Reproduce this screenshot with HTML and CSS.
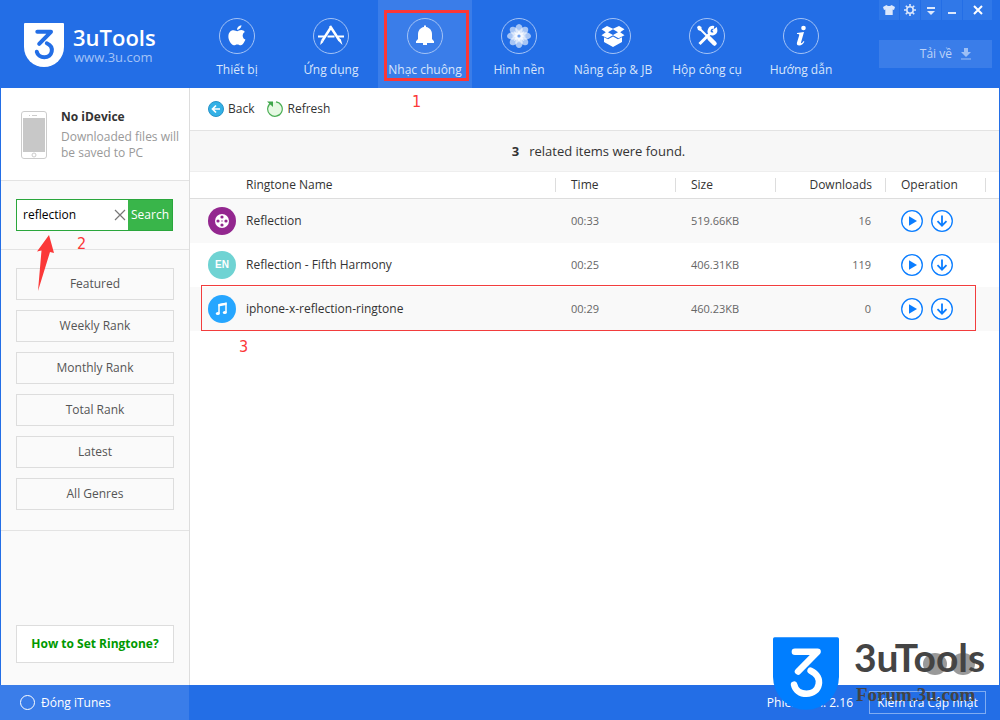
FILE: index.html
```html
<!DOCTYPE html>
<html lang="vi">
<head>
<meta charset="utf-8">
<meta name="viewport" content="width=device-width, initial-scale=1">
<title>3uTools</title>
<link rel="stylesheet" href="styles.css">
</head>
<body>
<svg class="defs" aria-hidden="true">
  <symbol id="play" viewBox="0 0 22 22"><circle cx="11" cy="11" r="10.3" fill="#fff" stroke="#0a7dff" stroke-width="1.3"/><path d="M8 6.3v9.4l8-4.7z" fill="#0a7dff"/></symbol>
  <symbol id="down" viewBox="0 0 22 22"><circle cx="11" cy="11" r="10.3" fill="#fff" stroke="#0a7dff" stroke-width="1.3"/><path d="M11 5.5v10M6.5 11.2l4.5 4.5 4.500-4.500" fill="none" stroke="#0a7dff" stroke-width="1.8"/></symbol>
  <symbol id="shield" viewBox="0 0 40 44"><path d="M1 0h38q1 0 1 1v23a20 20 0 0 1-40 0V1q0-1 1-1z" fill="currentColor"/><path class="shield-mark" d="M13.300 8.800H27L15.200 20.800M22.800 20.300C31 24 28.500 34.300 20.300 34.300 16.500 34.300 13.500 32 12.800 28.800" fill="none" stroke-width="4" stroke-linecap="round" stroke-linejoin="round"/></symbol>
</svg>
<div class="app">
  <header class="top">
    <div class="brand">
      <svg class="brand-logo"><use href="#shield"/></svg>
      <div><div class="brand-name">3uTools</div><div class="brand-url">www.3u.com</div></div>
    </div>
    <nav class="nav">
      <a href="#" class="tab">
        <svg viewBox="0 0 36 36"><circle cx="18" cy="18" r="17.500"/><path class="f" d="M22.400 7.200c.2 2-1.900 4.600-4.300 4.500-.2-2 1.900-4.300 4.300-4.500zM18.200 13.200c.9 0 2.200-1.100 4.100-1.100 1.400 0 2.700.7 3.500 1.900-3.200 1.900-2.600 6.300.6 7.600-.8 2.300-2.700 5.700-4.600 5.700-1.400 0-1.900-.8-3.500-.8s-2.100.8-3.400.8c-2.600 0-5.900-5.400-5.500-9.500.3-3.700 2.800-5.500 5.100-5.500 1.600 0 2.900.9 3.700.9z"/></svg>
        <span>Thiết bị</span></a>
      <a href="#" class="tab">
        <svg viewBox="0 0 36 36"><circle cx="18" cy="18" r="17.500"/><path class="s w2" d="M5 18.500h6.500M14.500 18.500h7M25 18.500h6"/><path class="s w25" d="M18.500 8.500L9.300 22.700M17 8l9.500 14.500"/><path class="f" d="M8 22l2.600 1.800-3.400 3.200zM25 22.600l2.700-1.700 1.800 6z"/></svg>
        <span>Ứng dụng</span></a>
      <a href="#" class="tab active">
        <svg viewBox="0 0 36 36"><circle cx="18" cy="18" r="17.500"/><path class="f" d="M17 7.500h2V9c4 .7 6 3.700 6 7.500v4.500l2 2.200V25H9v-1.800l2-2.200v-4.500c0-3.800 2-6.800 6-7.500zM16 25h4v2h-4z"/></svg>
        <span>Nhạc chuông</span>
        <i class="mark-tab"></i></a>
      <a href="#" class="tab">
        <svg viewBox="0 0 36 36"><circle cx="18" cy="18" r="17.500"/><g class="petals"><ellipse cx="18" cy="11.500" rx="3.700" ry="5.500"/><ellipse cx="18" cy="11.500" rx="3.700" ry="5.500" transform="rotate(45 18 18)"/><ellipse cx="18" cy="11.500" rx="3.700" ry="5.500" transform="rotate(90 18 18)"/><ellipse cx="18" cy="11.500" rx="3.700" ry="5.500" transform="rotate(135 18 18)"/><ellipse cx="18" cy="11.500" rx="3.700" ry="5.500" transform="rotate(180 18 18)"/><ellipse cx="18" cy="11.500" rx="3.700" ry="5.500" transform="rotate(225 18 18)"/><ellipse cx="18" cy="11.500" rx="3.700" ry="5.500" transform="rotate(270 18 18)"/><ellipse cx="18" cy="11.500" rx="3.700" ry="5.500" transform="rotate(315 18 18)"/></g><path class="f" fill-opacity=".75" d="M18 11l1.500 4.300 4-2.200-2.200 4L25.500 18l-4.200 1.300 2.200 4-4-2.200L18 25l-1.500-4-4 2.200 2.200-4L10.500 18l4.200-.9-2.200-4 4 2.200z"/><circle class="hub" cx="18" cy="18" r="1.600"/></svg>
        <span>Hình nền</span></a>
      <a href="#" class="tab">
        <svg viewBox="0 0 36 36"><circle cx="18" cy="18" r="17.500"/><path class="f" d="M12 8l6 2.700 6-2.700 5.500 3.300-4.300 2.900 4.300 3-6 3-5.500-3-5.500 3-6-3 4.300-3L6.500 11.300zM18 11.300l-5 2.900 5 2.800 5-2.800zM9 19.200l4 2.100 5-2.900 5 2.900 4-2.100V24l-9 5-9-5z" fill-rule="evenodd"/></svg>
        <span>Nâng cấp &amp; JB</span></a>
      <a href="#" class="tab">
        <svg viewBox="0 0 36 36"><circle cx="18" cy="18" r="17.500"/><path class="s w2" d="M10 10l9 9"/><path class="s w4" d="M20.500 20.500l5 5"/><path class="f" d="M8 9l2-1.500 2.500 1.500v2.500L11.500 13 9 12z"/><path class="s w3" d="M10.500 26L22 14.500"/><path class="s w3" d="M25 9.500C20.500 8.500 18.500 14 21.500 15.500 24 17 27.500 15 26.800 11.500L24 13.500"/></svg>
        <span>Hộp công cụ</span></a>
      <a href="#" class="tab">
        <svg viewBox="0 0 36 36"><circle cx="18" cy="18" r="17.500"/><circle class="f" cx="20.500" cy="10" r="2.300"/><path class="f" d="M14 15l7-1-3 10.500c-.2 1 .5 1 1.200.3l1.500-1.700.7.700c-1.300 2.200-3 3.700-5.200 3.700-2 0-2.700-1.200-2.200-3L16.300 17c.2-.8-.8-1-2.300-1z"/></svg>
        <span>Hướng dẫn</span></a>
    </nav>
    <div class="tools">
      <div class="winbar">
        <button aria-label="Skin"><svg viewBox="0 0 12 12"><path d="M3.500 1C4.500 2.300 7.500 2.300 8.500 1L12 3l-1 3-1.300-.5V11H2.300V5.500L1 6 0 3z"/></svg></button>
        <button aria-label="Settings"><svg viewBox="0 0 12 12"><circle cx="6" cy="6" r="3.200" fill="none" stroke="#dce8fc" stroke-width="1.600"/><path d="M6 0v2.500M6 9.500V12M0 6h2.500M9.500 6H12M1.800 1.800l1.700 1.700M8.500 8.500l1.700 1.700M1.800 10.200l1.700-1.700M8.500 3.500l1.700-1.700" stroke="#dce8fc" stroke-width="1.600"/></svg></button>
        <button aria-label="Menu"><svg viewBox="0 0 12 12"><path d="M2 3h8v2H2zM2 7h8l-4 4z"/></svg></button>
        <button aria-label="Minimize"><svg viewBox="0 0 12 12"><path d="M2 8h8v2H2z"/></svg></button>
        <button aria-label="Close" class="close"><svg viewBox="0 0 12 12"><path d="M2 2l8 8M10 2l-8 8" stroke="#fff" stroke-width="2"/></svg></button>
      </div>
      <button class="download">Tải về <svg viewBox="0 0 12 12"><path d="M4 0h4v4h3L6 9 1 4h3zM1 10.500h10v1H1z"/></svg></button>
    </div>
  </header>

  <div class="body">
    <aside class="side">
      <section class="device">
        <svg viewBox="0 0 26 48"><rect x=".5" y=".5" width="25" height="47" rx="2.500" fill="#fff" stroke="#ccc"/><path d="M2 7h22v34H2z" fill="#c8c8c8"/><path d="M8 4.500h1M11 4.500h5" stroke="#ccc"/><circle cx="13" cy="44" r="2" fill="none" stroke="#ccc"/></svg>
        <div><h2>No iDevice</h2><p>Downloaded files will be saved to PC</p></div>
      </section>
      <form class="search" onsubmit="return false">
        <div class="search-box">
          <input type="text" value="reflection" aria-label="Search ringtones">
          <button type="reset" class="clear" aria-label="Clear"><svg viewBox="0 0 12 12"><path d="M1 1l10 10M11 1L1 11" stroke="#777" stroke-width="1.200"/></svg></button>
          <button class="go">Search</button>
        </div>
        <svg class="arrow" viewBox="0 0 18 56"><path d="M12 0l5 18-4-1L1 56 4.500 15.500 0 16.500z" fill="#fb3838"/></svg>
        <span class="num num-2">2</span>
      </form>
      <div class="genres">
        <button>Featured</button><button>Weekly Rank</button><button>Monthly Rank</button><button>Total Rank</button><button>Latest</button><button>All Genres</button>
      </div>
      <div class="help"><button>How to Set Ringtone?</button></div>
    </aside>

    <main class="main">
      <div class="bar">
        <button><svg viewBox="0 0 16 16"><circle cx="8" cy="8" r="7.500" fill="#33b1e6" stroke="#2893c8"/><path d="M12 8H4.500M8 4.500L4.500 8 8 11.500" fill="none" stroke="#fff" stroke-width="1.700"/></svg>Back</button>
        <button><svg viewBox="0 0 16 16"><path d="M4.500 1.600A7.300 7.300 0 1 0 9 .8" fill="#e6f9e3" stroke="#4bae55" stroke-width="1.200"/><path d="M0 .5h6v5.500z" fill="#3fa64b"/></svg>Refresh</button>
        <span class="num num-1">1</span>
      </div>
      <div class="found"><b>3</b>related items were found.</div>
      <table>
        <colgroup><col><col class="c-time"><col class="c-size"><col class="c-dl"><col class="c-op"><col class="c-end"></colgroup>
        <thead><tr><th class="name">Ringtone Name</th><th>Time</th><th>Size</th><th class="r">Downloads</th><th>Operation</th><th></th></tr></thead>
        <tbody>
          <tr><td><div class="song"><svg viewBox="0 0 28 28"><circle cx="14" cy="14" r="14" fill="#93278f"/><circle cx="14" cy="14" r="7" fill="#fff"/><g fill="#93278f"><circle cx="14" cy="10" r="1.600"/><circle cx="14" cy="18" r="1.600"/><circle cx="10" cy="14" r="1.600"/><circle cx="18" cy="14" r="1.600"/><circle cx="14" cy="14" r=".7"/></g></svg>Reflection</div></td><td>00:33</td><td>519.66KB</td><td class="r">16</td><td><div class="ops"><button aria-label="Play"><svg><use href="#play"/></svg></button><button aria-label="Download"><svg><use href="#down"/></svg></button></div></td><td></td></tr>
          <tr><td><div class="song"><span class="en">EN</span>Reflection - Fifth Harmony</div></td><td>00:25</td><td>406.31KB</td><td class="r">119</td><td><div class="ops"><button aria-label="Play"><svg><use href="#play"/></svg></button><button aria-label="Download"><svg><use href="#down"/></svg></button></div></td><td></td></tr>
          <tr class="picked"><td><div class="song"><svg viewBox="0 0 28 28"><circle cx="14" cy="14" r="14" fill="#26a6ff"/><path d="M11 18.500V9.800l7-1.300v9" fill="none" stroke="#fff" stroke-width="1.500"/><path d="M10.500 9l8-1.500V10l-8 1.500z" fill="#fff"/><ellipse cx="9.800" cy="18.500" rx="2" ry="1.600" fill="#fff"/><ellipse cx="16.800" cy="17.500" rx="2" ry="1.600" fill="#fff"/></svg>iphone-x-reflection-ringtone</div><i class="mark-row"></i><span class="num num-3">3</span></td><td>00:29</td><td>460.23KB</td><td class="r">0</td><td><div class="ops"><button aria-label="Play"><svg><use href="#play"/></svg></button><button aria-label="Download"><svg><use href="#down"/></svg></button></div></td><td></td></tr>
        </tbody>
      </table>
    </main>
  </div>

  <footer class="foot">
    <button class="itunes"><i></i>Đóng iTunes</button>
    <div class="version"><span>Phiên bản: 2.16</span><button>Kiểm tra Cập nhật</button></div>
  </footer>

  <div class="watermark">
    <svg class="wm-logo"><use href="#shield"/></svg>
    <div class="wm-text"><i class="dot"></i><i class="dot dot-2"></i><div class="wm-name">3uTools</div><div class="wm-url">Forum.3u.com</div></div>
  </div>
</div>
</body>
</html>
```
FILE: styles.css
```css
* { box-sizing: border-box; }
body { margin: 0; font: 12px/16px "Open Sans", "Noto Sans", sans-serif; color: #333; }
button { font: inherit; color: inherit; border: 0; padding: 0; background: none; cursor: pointer; }
svg { display: block; flex: none; }
.defs { position: absolute; width: 0; height: 0; }
.shield-mark { stroke: var(--mark); }

.app { position: relative; min-height: 100vh; display: flex; flex-direction: column; background: #fff; }

.top { display: flex; height: 88px; background: #236ee6; }
.brand { flex: none; width: 190px; display: flex; gap: 9px; padding: 23px 0 0 24px; color: #fff; }
.brand-logo { width: 40px; height: 44px; --mark: #236ee6; }
.brand-name { font-size: 22px; line-height: 28px; font-weight: 600; }
.brand-url { padding-left: 1px; font-size: 13px; line-height: 12px; color: #a3c3f7; }
.nav { display: flex; flex: none; }
.tab { position: relative; width: 94px; padding-top: 18px; display: flex; flex-direction: column; align-items: center; gap: 8px; color: #d8e5fb; text-decoration: none; white-space: nowrap; }
.tab.active { background: #3a7de9; }
.tab svg { width: 36px; height: 36px; fill: none; stroke: #a4c3f5; }
.tab .f { fill: #fff; stroke: none; }
.tab .s { stroke: #fff; }
.w2 { stroke-width: 2; }
.w25 { stroke-width: 2.5; }
.w3 { stroke-width: 3; }
.w4 { stroke-width: 4.5; stroke-linecap: round; }
.petals { fill: #fff; fill-opacity: .6; stroke: none; }
.tab .hub { fill: #6fa0f0; stroke: none; }
.mark-tab { position: absolute; inset: 10px 3px 7px 6px; border: 3px solid #fb3737; }
.tools { margin-left: auto; padding-right: 8px; width: 121px; display: flex; flex-direction: column; gap: 20px; }
.winbar { display: flex; gap: 1px; }
.winbar button { width: 20px; height: 20px; background: #3078e8; display: grid; place-items: center; }
.winbar .close { width: 29px; }
.winbar svg, .download svg { width: 12px; height: 12px; fill: #dce8fc; }
.download { height: 28px; background: #3a7de9; color: #bdd3f8; display: flex; align-items: center; justify-content: flex-end; gap: 8px; padding-right: 20px; }
.download svg { fill: #9dbff5; }

.body { flex: 1; display: flex; border: solid #236ee6; border-width: 0 1px; }
.side { flex: none; width: 189px; background: #fafafa; border-right: 1px solid #ddd; display: flex; flex-direction: column; }
.device { display: flex; gap: 14px; padding: 21px 6px 19px 20px; background: #fff; border-bottom: 1px solid #e3e3e3; }
.device svg { width: 26px; height: 48px; margin-top: 2px; }
.device h2 { margin: 0 0 4px; font-size: 12px; line-height: 16px; }
.device p { margin: 0; color: #999; }
.search { position: relative; padding: 18px 16px 18px 15px; border-bottom: 1px solid #e3e3e3; }
.search-box { display: flex; height: 32px; border: 1px solid #2aa63c; background: #fff; }
.search-box input { flex: 1; min-width: 0; border: 0; outline: 0; padding: 0 6px; font: inherit; color: #000; background: none; }
.clear { width: 16px; display: grid; place-items: center; }
.clear svg { width: 12px; height: 12px; }
.go { width: 44px; background: #39b54a; color: #fff; }
.arrow { position: absolute; z-index: 2; left: 36px; top: 54px; width: 18px; height: 56px; }
.num { position: absolute; z-index: 2; font: 16px/16px "DejaVu Sans Condensed", "DejaVu Sans", sans-serif; color: #fb3838; }
.num-1 { left: 222px; top: 6px; }
.num-2 { left: 76px; top: 55px; }
.num-3 { left: 49px; top: 52px; }
.genres { display: flex; flex-direction: column; gap: 10px; padding: 18px 15px 20px; border-bottom: 1px solid #e3e3e3; }
.genres button { height: 32px; border: 1px solid #ddd; color: #555; }
.help { margin-top: auto; padding: 20px 15px 22px; }
.help button { width: 100%; height: 38px; border: 1px solid #ddd; background: #fff; color: #090; font-weight: 700; white-space: nowrap; }

.main { flex: 1; min-width: 0; }
.bar { position: relative; height: 43px; display: flex; align-items: center; gap: 13px; padding: 0 18px; border-bottom: 1px solid #e3e3e3; }
.bar button { display: flex; align-items: center; gap: 4px; }
.bar svg { width: 16px; height: 16px; }
.found { height: 41px; padding-left: 8px; display: flex; align-items: center; justify-content: center; gap: 10px; background: #f7f7f7; border-bottom: 1px solid #eee; font-size: 13px; }
table { width: 100%; table-layout: fixed; border-collapse: separate; border-spacing: 0; }
.c-time { width: 120px; }
.c-size { width: 100px; }
.c-dl { width: 110px; }
.c-op { width: 100px; }
.c-end { width: 13px; }
th { height: 27px; padding: 0 14px 0 15px; text-align: left; font-weight: 400; border-bottom: 1px solid #ddd; background: linear-gradient(#ddd, #ddd) right center / 1px 14px no-repeat; }
th:last-child { background: none; padding: 0; }
th.name { padding-left: 56px; }
td { height: 44px; padding: 0 15px; font-size: 11px; color: #666; }
td:first-child { padding-left: 18px; }
td:last-child { padding: 0; }
tbody tr:nth-child(odd) td { background: #f9f9f9; }
.r { text-align: right; }
.song { display: flex; align-items: center; gap: 10px; font-size: 12px; color: #333; }
.song svg, .en { width: 28px; height: 28px; }
.en { border-radius: 50%; background: #6fd3d3; color: #fff; font: 700 10px/28px "Liberation Sans", sans-serif; text-align: center; }
.ops { display: flex; gap: 8px; }
.ops button, .ops svg { width: 22px; height: 22px; }
.picked { position: relative; }
.mark-row { position: absolute; inset: -2px 23px 0 11px; border: 1px solid #f23d3d; pointer-events: none; }

.foot { flex: none; height: 35px; display: flex; justify-content: space-between; background: #236ee6; color: #fff; }
.itunes { width: 189px; display: flex; align-items: center; gap: 6px; padding-left: 20px; background: #3a7de9; }
.itunes i { width: 15px; height: 15px; border: 1px solid #fff; border-radius: 50%; }
.version { display: flex; align-items: center; gap: 16px; padding-right: 14px; }
.version button { height: 23px; width: 117px; border: 1px solid #7facf2; white-space: nowrap; }

.watermark { position: absolute; right: 12px; bottom: 10px; display: flex; gap: 15px; pointer-events: none; }
.wm-logo { width: 66px; height: 73px; color: #007eff; --mark: #fff; }
.wm-text { position: relative; width: 134px; color: #444; }
.dot { position: absolute; left: 69px; top: 16px; width: 24px; height: 22px; border-radius: 50%; background: #999; }
.dot-2 { left: 97px; }
.wm-name { position: relative; font: 700 39px/40px Lato, sans-serif; }
.wm-url { position: relative; margin-top: 6px; padding-left: 2px; font: 700 19px/24px "Liberation Serif", serif; }
```
